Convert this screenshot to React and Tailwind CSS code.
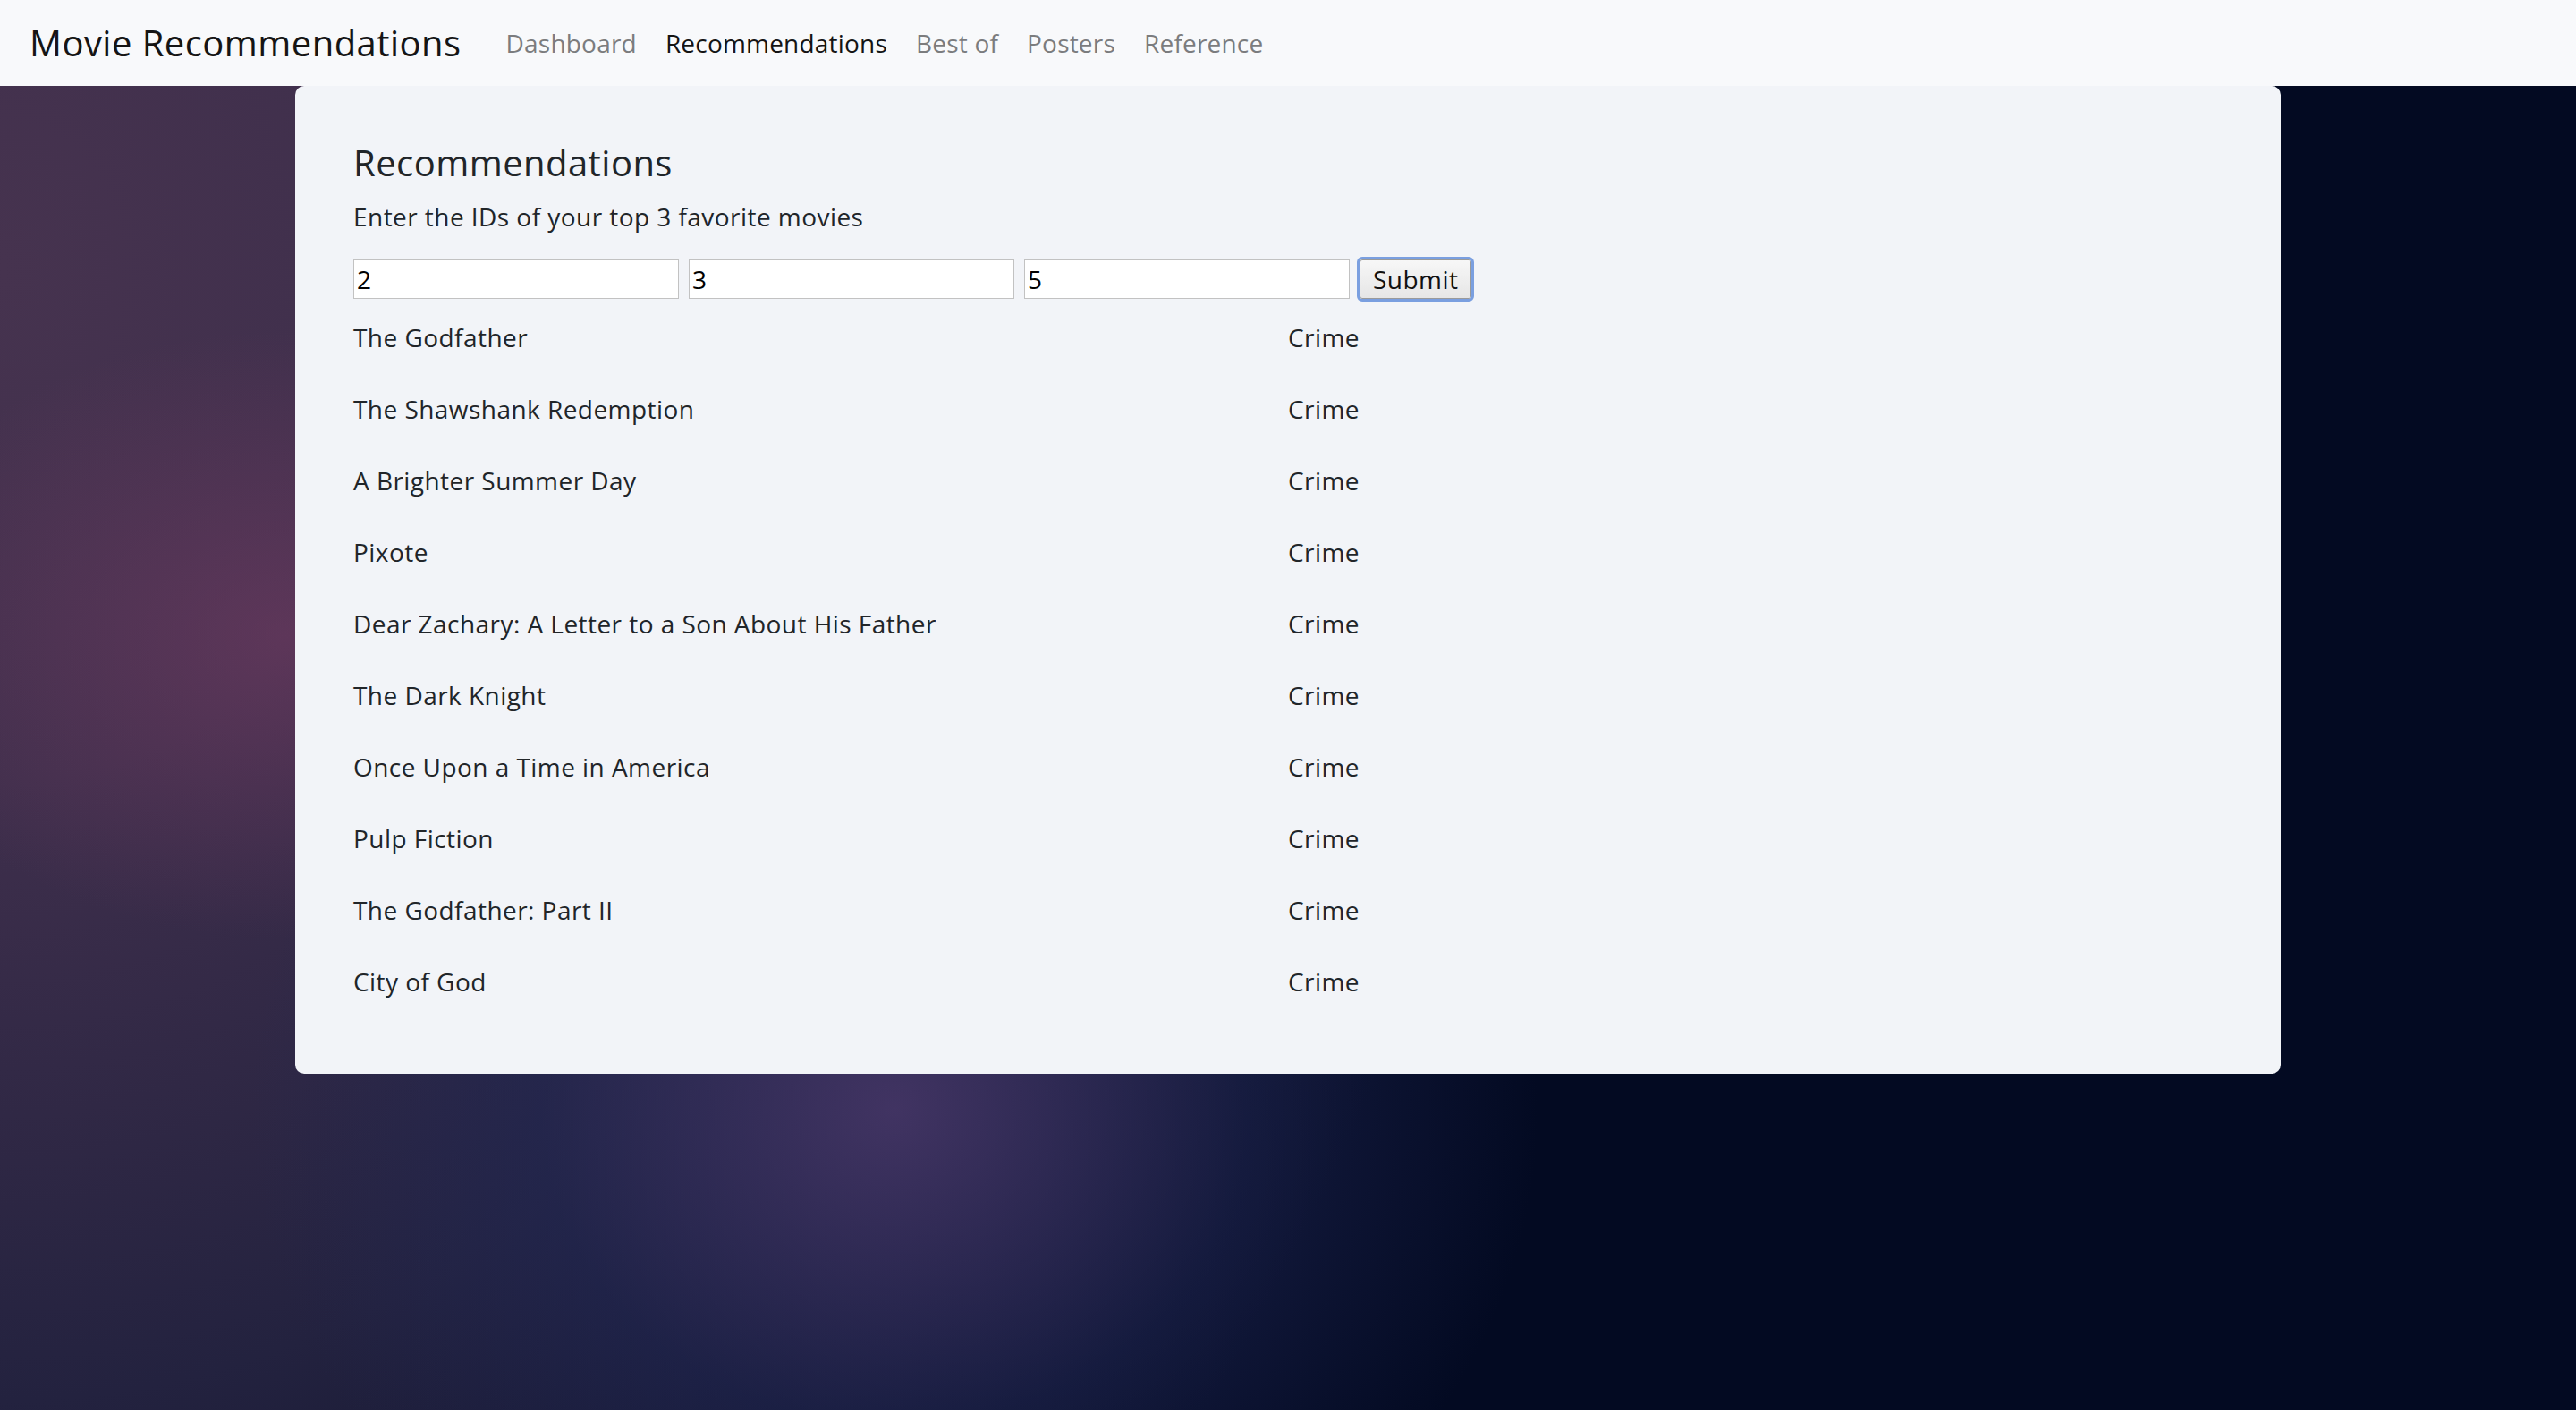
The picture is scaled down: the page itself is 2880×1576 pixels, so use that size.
import React from "react";

const movies = [
  "The Godfather",
  "The Shawshank Redemption",
  "A Brighter Summer Day",
  "Pixote",
  "Dear Zachary: A Letter to a Son About His Father",
  "The Dark Knight",
  "Once Upon a Time in America",
  "Pulp Fiction",
  "The Godfather: Part II",
  "City of God",
];

export default function App() {
  return (
    <div className="min-h-screen w-full bg-[#030a22] bg-[image:radial-gradient(ellipse_480px_340px_at_320px_710px,rgba(118,60,100,0.55),transparent),radial-gradient(ellipse_720px_640px_at_1000px_1240px,rgba(72,56,106,0.85),rgba(34,40,86,0.5)_55%,transparent),radial-gradient(ellipse_1900px_2300px_at_0px_300px,#46334f_0%,#3f2f4c_25%,#23223f_55%,#030a22_90%)] font-['Open_Sans',sans-serif] tracking-[0.45px] text-[#212529]">
      <nav className="flex h-[96px] items-center bg-[#f8f9fb] pl-[33px]">
        <span className="mr-[34px] text-[40px] leading-[56px] text-[#151515]">
          Movie Recommendations
        </span>
        <div className="flex items-center text-[28px] leading-[40px] tracking-[0.2px]">
          <a className="px-[16px] text-[#7b7c7e]">Dashboard</a>
          <a className="px-[16px] text-[#141414]">Recommendations</a>
          <a className="px-[16px] text-[#7b7c7e]">Best of</a>
          <a className="px-[16px] text-[#7b7c7e]">Posters</a>
          <a className="px-[16px] text-[#7b7c7e]">Reference</a>
        </div>
      </nav>

      <main className="mx-auto w-[2220px] rounded-b-[10px] rounded-t-[10px] bg-[#f2f4f8] px-[65px] pb-[63px] pt-[62px]">
        <h1 className="mb-[16px] text-[40px] font-normal leading-[48px]">
          Recommendations
        </h1>
        <p className="text-[28px] leading-[40px]">
          Enter the IDs of your top 3 favorite movies
        </p>

        <div className="mt-[28px] flex items-center gap-[11px]">
          <input
            readOnly
            value="2"
            className="h-[44px] w-[364px] border border-[#c2c2c2] bg-white px-[3px] text-[28px] text-black outline-none"
          />
          <input
            readOnly
            value="3"
            className="h-[44px] w-[364px] border border-[#c2c2c2] bg-white px-[3px] text-[28px] text-black outline-none"
          />
          <input
            readOnly
            value="5"
            className="h-[44px] w-[364px] border border-[#c2c2c2] bg-white px-[3px] text-[28px] text-black outline-none"
          />
          <button className="h-[44px] rounded-[3px] border border-[#9a9a9a] bg-[linear-gradient(#f7f7f7,#e6e6e6)] px-[14px] text-[28px] leading-[40px] text-[#111] outline-[3px] outline-offset-0 outline-[#7a9fe0] outline-solid">
            Submit
          </button>
        </div>

        <div className="mt-[3px]">
          {movies.map((m) => (
            <div key={m} className="grid h-[80px] grid-cols-2 items-center text-[28px] leading-[40px]">
              <div>{m}</div>
              <div>Crime</div>
            </div>
          ))}
        </div>
      </main>
    </div>
  );
}
